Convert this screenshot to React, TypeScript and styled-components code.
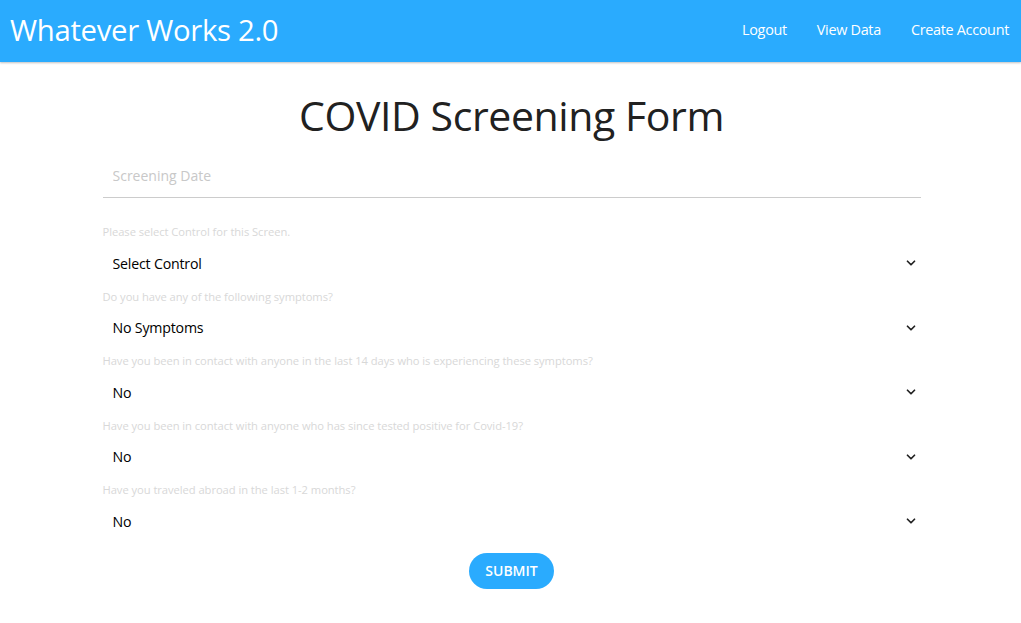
import React from 'react';
import styled, { createGlobalStyle } from 'styled-components';
import { ChevronDown } from 'lucide-react';

const GlobalStyle = createGlobalStyle`
    body {
        margin: 0;
        font-family: "Open Sans", "Noto Sans", sans-serif;
        background: #ffffff;
        color: #212121;
    }
`;

const Header = styled.header`
    height: 62px;
    box-sizing: border-box;
    background: #2aabfe;
    box-shadow: 0 1px 2px rgba(0, 0, 0, 0.25);
    display: flex;
    align-items: center;
    justify-content: space-between;
    padding: 0 12px 3px 10px;
`;

const Brand = styled.div`
    color: #ffffff;
    font-size: 29.3px;
    letter-spacing: -0.3px;
`;

const Nav = styled.nav`
    display: flex;
    gap: 30px;
`;

const NavLink = styled.a`
    color: #ffffff;
    font-size: 14.4px;
    letter-spacing: -0.3px;
    text-decoration: none;
    cursor: pointer;
`;

const Main = styled.main`
    width: 818px;
    margin: 0 auto;
    padding-left: 2px;
    display: flex;
    flex-direction: column;
`;

const Title = styled.h1`
    margin: 29px 0 18px;
    text-align: center;
    font-weight: 400;
    font-size: 41px;
    line-height: 48px;
    letter-spacing: -0.4px;
    color: #212121;
`;

const DateInput = styled.input`
    height: 41px;
    box-sizing: border-box;
    border: none;
    border-bottom: 1px solid #cccccc;
    padding: 0 10px 4px;
    font-family: inherit;
    font-size: 14px;
    outline: none;
    margin-bottom: 27px;
    &::placeholder {
        color: #c8c8c8;
    }
`;

const Field = styled.div`
    display: flex;
    flex-direction: column;
    margin-bottom: 6.5px;
`;

const Label = styled.label`
    font-size: 11.2px;
    line-height: 14px;
    letter-spacing: -0.05px;
    color: #d8d8d8;
    margin-bottom: 4px;
`;

const SelectWrap = styled.div`
    position: relative;
    height: 40px;
`;

const Select = styled.select`
    appearance: none;
    width: 100%;
    height: 100%;
    border: none;
    background: transparent;
    padding: 0 10px;
    font-family: inherit;
    font-size: 14.2px;
    letter-spacing: -0.2px;
    color: #000000;
    outline: none;
`;

const Chevron = styled(ChevronDown)`
    position: absolute;
    right: 3px;
    top: 13px;
    pointer-events: none;
    color: #222222;
`;

const SubmitButton = styled.button`
    align-self: center;
    margin-top: 5px;
    height: 36px;
    padding: 0 16px;
    border: none;
    border-radius: 18px;
    background: #2aabfe;
    color: #ffffff;
    font-family: inherit;
    font-size: 14px;
    font-weight: 600;
    text-transform: uppercase;
    cursor: pointer;
`;

type Question = {
    label: string;
    options: string[];
};

const questions: Question[] = [
    { label: 'Please select Control for this Screen.', options: ['Select Control'] },
    { label: 'Do you have any of the following symptoms?', options: ['No Symptoms', 'Fever', 'Cough', 'Shortness of Breath'] },
    { label: 'Have you been in contact with anyone in the last 14 days who is experiencing these symptoms?', options: ['No', 'Yes'] },
    { label: 'Have you been in contact with anyone who has since tested positive for Covid-19?', options: ['No', 'Yes'] },
    { label: 'Have you traveled abroad in the last 1-2 months?', options: ['No', 'Yes'] },
];

const App = () => (
    <>
        <GlobalStyle />
        <Header>
            <Brand>Whatever Works 2.0</Brand>
            <Nav>
                <NavLink>Logout</NavLink>
                <NavLink>View Data</NavLink>
                <NavLink>Create Account</NavLink>
            </Nav>
        </Header>
        <Main>
            <Title>COVID Screening Form</Title>
            <DateInput placeholder="Screening Date" />
            {questions.map((q) => (
                <Field key={q.label}>
                    <Label>{q.label}</Label>
                    <SelectWrap>
                        <Select defaultValue={q.options[0]}>
                            {q.options.map((o) => (
                                <option key={o}>{o}</option>
                            ))}
                        </Select>
                        <Chevron size={14} strokeWidth={3} />
                    </SelectWrap>
                </Field>
            ))}
            <SubmitButton>Submit</SubmitButton>
        </Main>
    </>
);

export default App;
